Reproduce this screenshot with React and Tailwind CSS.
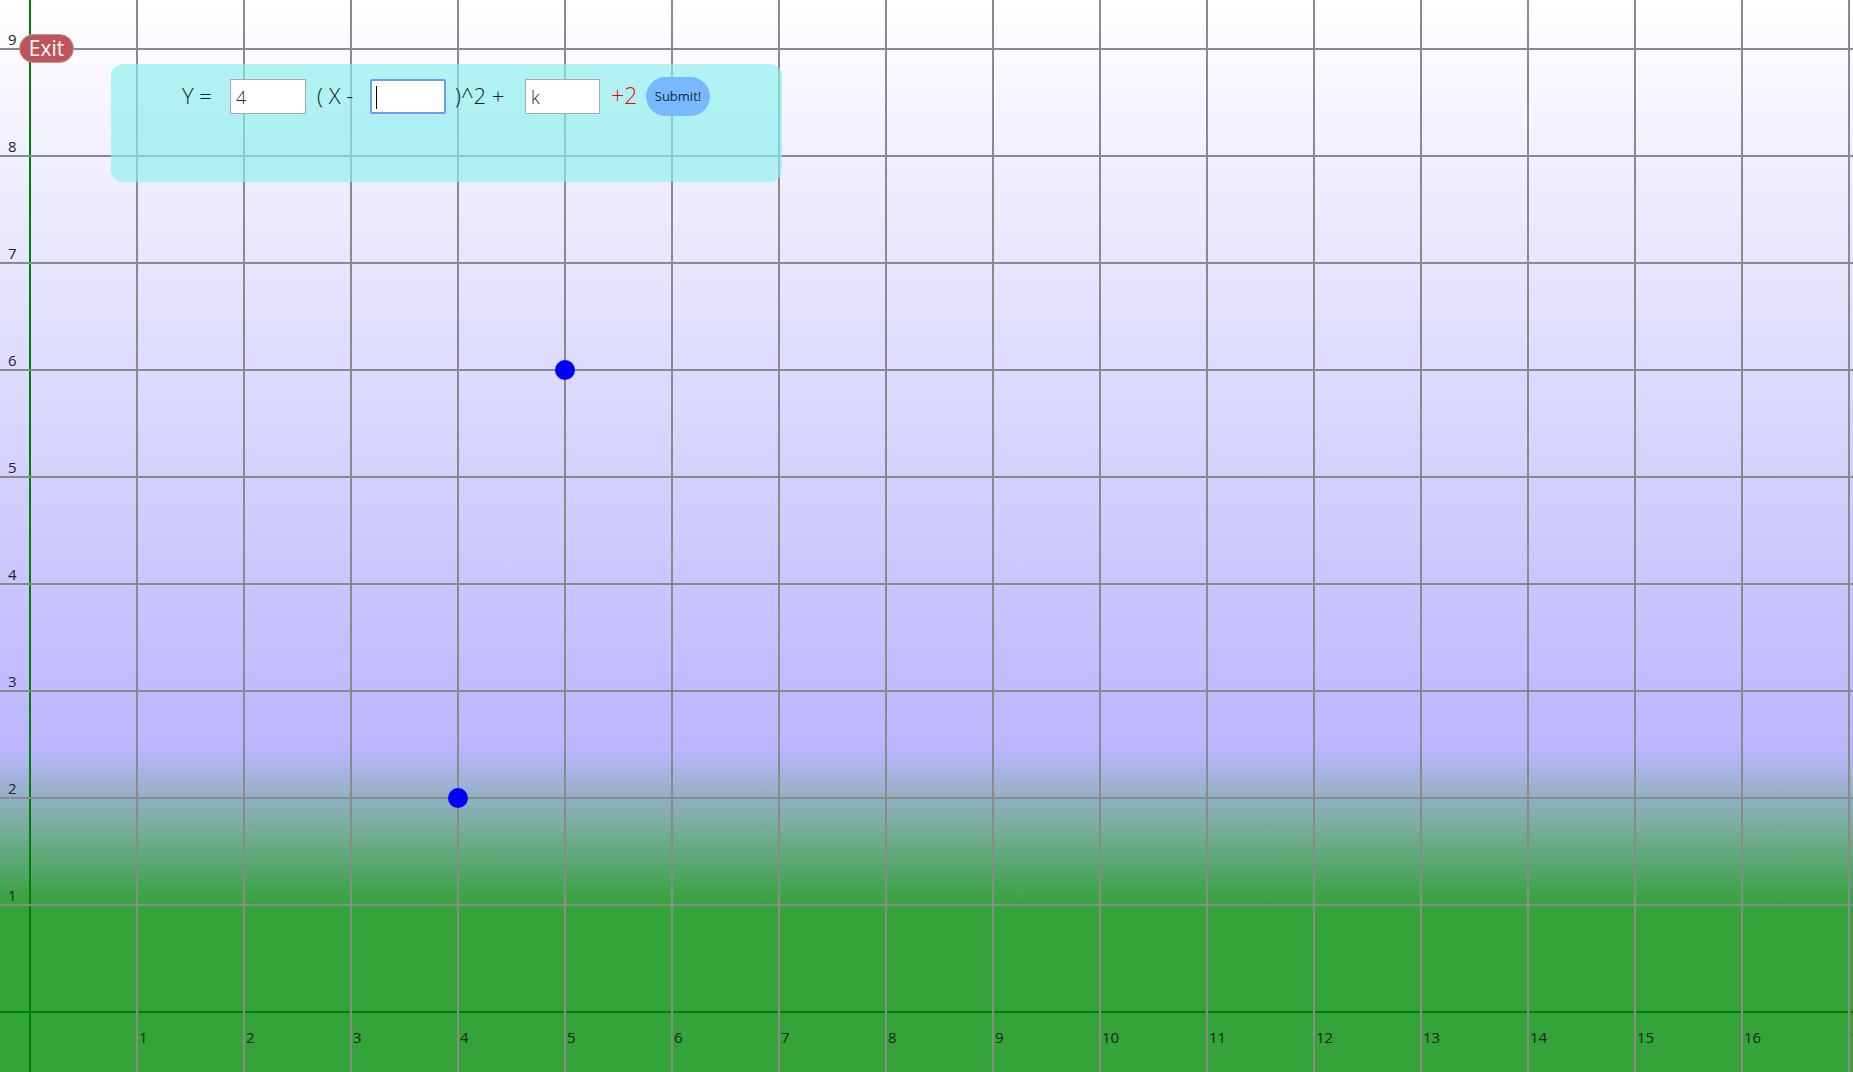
import React from 'react'

// graph geometry (px)
const ORIGIN_X = 30
const ORIGIN_Y = 1012
const STEP = 107

const xs = Array.from({ length: 17 }, (_, i) => i + 1)
const ys = Array.from({ length: 9 }, (_, i) => i + 1)
const points = [
  { x: 5, y: 6 },
  { x: 4, y: 2 },
]

function Grid() {
  return (
    <svg className="absolute inset-0 h-full w-full" width="1853" height="1072">
      {/* axes */}
      <line x1={ORIGIN_X} y1="0" x2={ORIGIN_X} y2="1072" stroke="#008000" strokeWidth="2" />
      <line x1="0" y1={ORIGIN_Y} x2="1853" y2={ORIGIN_Y} stroke="#008000" strokeWidth="2" />

      {/* grid */}
      {xs.map((k) => (
        <line
          key={'v' + k}
          x1={ORIGIN_X + k * STEP}
          y1="0"
          x2={ORIGIN_X + k * STEP}
          y2="1072"
          stroke="#8a8a8a"
          strokeWidth="2"
        />
      ))}
      {ys.map((k) => (
        <line
          key={'h' + k}
          x1="0"
          y1={ORIGIN_Y - k * STEP}
          x2="1853"
          y2={ORIGIN_Y - k * STEP}
          stroke="#8a8a8a"
          strokeWidth="2"
        />
      ))}

      {/* labels */}
      <g fontFamily="'Open Sans', 'DejaVu Sans', sans-serif" fontSize="15" fill="#222">
        {xs.map((k) => (
          <text key={'lx' + k} x={ORIGIN_X + k * STEP + 2} y={ORIGIN_Y + 31}>
            {k}
          </text>
        ))}
        {ys.map((k) => (
          <text key={'ly' + k} x="8" y={ORIGIN_Y - k * STEP - 4}>
            {k}
          </text>
        ))}
      </g>

      {/* points */}
      {points.map((p, i) => (
        <circle
          key={i}
          cx={ORIGIN_X + p.x * STEP}
          cy={ORIGIN_Y - p.y * STEP}
          r="10"
          fill="#0000ff"
        />
      ))}
    </svg>
  )
}

function EquationPanel() {
  return (
    <div className="absolute left-[111px] top-[64px] h-[118px] w-[671px] rounded-[12px] bg-[rgba(139,238,238,0.65)]">
      <div className="flex items-center pl-[71px] pt-[13px] text-[22px] font-light text-[#1e1e1e] leading-none">
        <span className="mb-[3px] w-[31px] whitespace-nowrap">Y =</span>

        <input
          readOnly
          value="4"
          className="ml-[17px] h-[35px] w-[76px] border border-[#a9a9a9] bg-white px-[5px] text-[18px] font-light text-[#2a2a2a] outline-none"
        />

        <span className="mb-[3px] ml-[11px] w-[38px] whitespace-nowrap">( X -</span>

        {/* focused input */}
        <div className="relative ml-[15px] h-[35px] w-[76px] rounded-[2px] border-2 border-[#6d9cf0] bg-white">
          <input readOnly value="" className="h-full w-full bg-transparent px-[4px] text-[18px] outline-none" />
          <span className="absolute left-[4px] top-[5px] h-[23px] w-px bg-black" />
        </div>

        <span className="mb-[3px] ml-[9px] w-[55px] whitespace-nowrap">)^2 +</span>

        <input
          readOnly
          value="k"
          className="ml-[15px] h-[35px] w-[75px] border border-[#a9a9a9] bg-white px-[5px] text-[18px] font-light text-[#2a2a2a] outline-none"
        />

        <span className="mb-[3px] ml-[11px] w-[28px] whitespace-nowrap text-[23px] text-[#ff0000]">+2</span>

        <button className="ml-[7px] h-[39px] w-[64px] rounded-full bg-[#78b8ff] text-[13px] font-normal text-[#1b2a3a]">
          Submit!
        </button>
      </div>
    </div>
  )
}

export default function App() {
  return (
    <div
      className="relative h-screen w-screen overflow-hidden bg-[linear-gradient(to_bottom,#ffffff_0%,#bbb6ff_70%,#33a33a_84.5%,#33a33a_100%)]"
      style={{ fontFamily: "'Open Sans', 'DejaVu Sans', sans-serif" }}
    >
      <Grid />
      <EquationPanel />

      <button className="absolute left-[19px] top-[34px] flex h-[29px] w-[55px] items-center justify-center rounded-full border border-[#b0a0a0] bg-[#c0545a] text-[21px] leading-none text-white">
        Exit
      </button>
    </div>
  )
}
